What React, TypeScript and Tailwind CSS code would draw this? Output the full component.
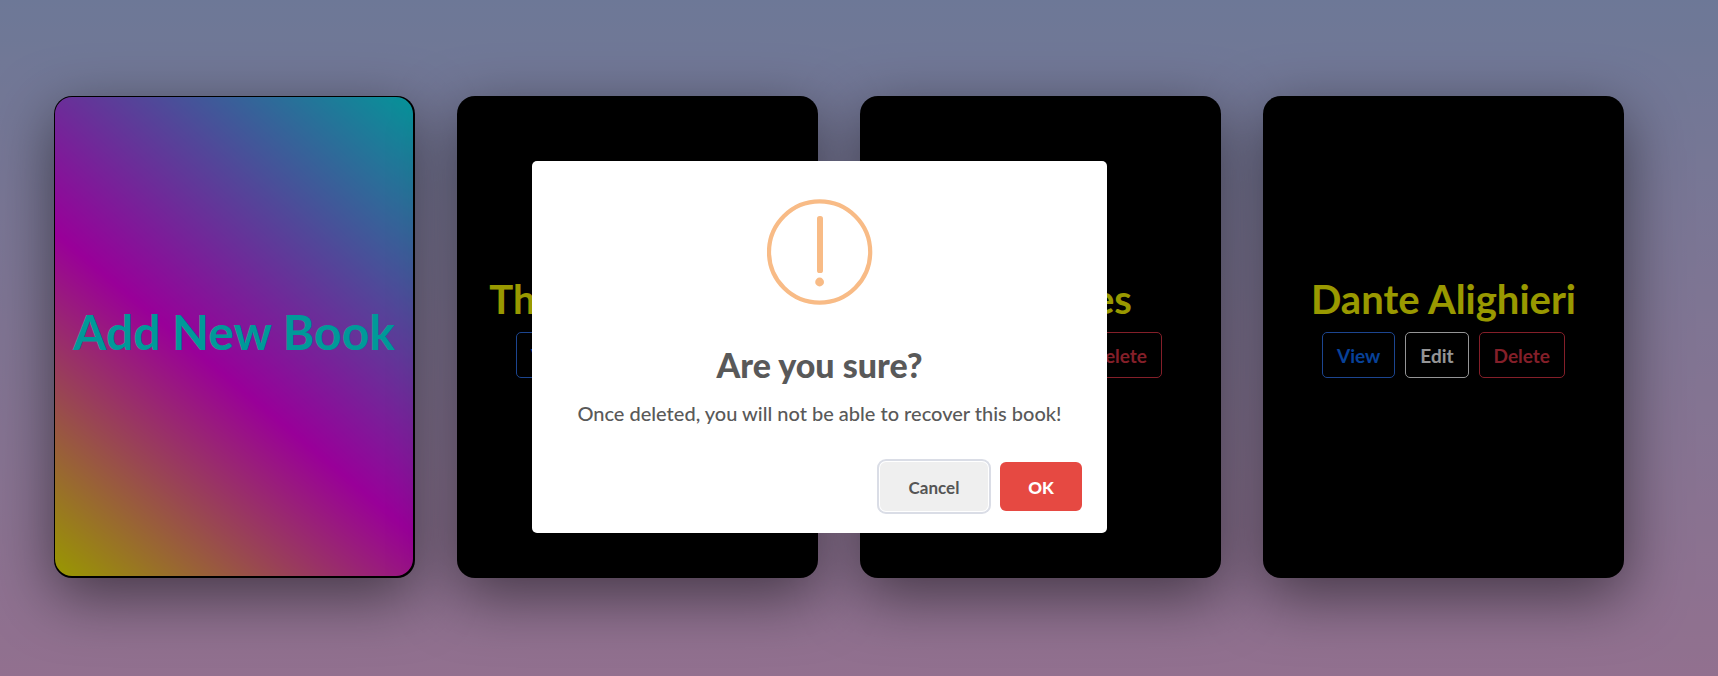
const FONT = "font-['Lato','Liberation_Sans',sans-serif]";

const books = ["Things Fall Apart", "Fairy Tales", "Dante Alighieri"];

const cardBase =
  "flex h-[482px] w-[361px] shrink-0 flex-col items-center justify-center rounded-[18px] bg-black shadow-[0_18px_60px_rgba(0,0,0,0.5)]";

const actionBase =
  "h-[46px] rounded-[5px] border px-[14px] text-[19px] font-bold leading-none";

function BookCard({ title }: { title: string }) {
  return (
    <article className={`${cardBase} pb-5`}>
      <h2 className="whitespace-nowrap text-[40px] font-bold leading-[46px] text-[#ffff00]">
        {title}
      </h2>
      <div className="mt-[10px] flex gap-[10px]">
        <button type="button" className={`${actionBase} border-[#2f74f0] text-[#0d6efd]`}>
          View
        </button>
        <button type="button" className={`${actionBase} border-[#f8f9fa] text-[#f8f9fa]`}>
          Edit
        </button>
        <button type="button" className={`${actionBase} border-[#dc3545] text-[#dc3545]`}>
          Delete
        </button>
      </div>
    </article>
  );
}

function WarningIcon() {
  return (
    <svg viewBox="0 0 106 106" className="size-[106px]" fill="none" aria-hidden="true">
      <circle cx="52.6" cy="53" r="50.6" stroke="#f8bb86" strokeWidth="4.2" />
      <rect x="50" y="17" width="6" height="57" rx="2.6" fill="#f8bb86" />
      <circle cx="52.6" cy="83" r="4.4" fill="#f8bb86" />
    </svg>
  );
}

export default function App() {
  return (
    <div className={`${FONT} relative min-h-screen overflow-hidden bg-linear-to-b from-[#b6c9fc] to-[#f3bbee]`}>
      <main className="flex flex-wrap gap-[42px] py-24 pr-12 pl-[54px]">
        <article className={`${cardBase} pt-px pr-[2px] pb-[2px] pl-px`}>
          <button
            type="button"
            className="size-full whitespace-nowrap rounded-[17px] bg-[linear-gradient(40deg,#ffff00_0%,#ff00ff_44%,#00ffff_102%)] pb-[10px] text-[48px] font-bold leading-none text-[#00ffff]"
          >
            Add New Book
          </button>
        </article>
        {books.map((title) => (
          <BookCard key={title} title={title} />
        ))}
      </main>

      <div className="absolute inset-0 flex items-center justify-center bg-black/40 pt-[18px] pr-[79px]">
        <div
          role="alertdialog"
          aria-modal="true"
          aria-labelledby="dialog-title"
          aria-describedby="dialog-text"
          className="flex w-[575px] flex-col items-center rounded-[5px] bg-white pt-[38px] text-[#595959]"
        >
          <WarningIcon />
          <h1 id="dialog-title" className="mt-10 text-[34px] font-black leading-10">
            Are you sure?
          </h1>
          <p id="dialog-text" className="mt-4 text-[20px] font-medium leading-6">
            Once deleted, you will not be able to recover this book!
          </p>
          <div className="mt-[37px] flex gap-3 self-end pr-[25px] pb-[22px]">
            <button
              type="button"
              className="h-[49px] w-[108px] rounded-[6px] bg-[#efefef] pt-[2px] text-[17px] font-bold text-[#555555] shadow-[0_0_0_1px_#fff,0_0_0_3px_#dadde6]"
            >
              Cancel
            </button>
            <button
              type="button"
              className="h-[49px] w-[82px] rounded-[6px] bg-[#e64942] pt-[2px] text-[17px] font-black text-white"
            >
              OK
            </button>
          </div>
        </div>
      </div>
    </div>
  );
}
